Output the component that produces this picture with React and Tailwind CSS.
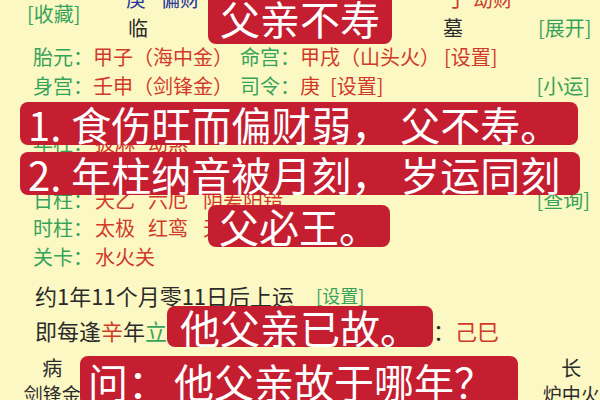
import React from 'react';

const G = 'text-[#36a35a]';
const R = 'text-[#d13a2b]';
const D = 'text-[#2b2b2b]';

function Overlay({ className, children }) {
  return (
    <div
      className={`absolute flex items-center justify-center rounded-[8px] bg-[#c41e30] text-[40px] leading-none whitespace-nowrap text-white ${className}`}
    >
      {children}
    </div>
  );
}

function Row({ children }) {
  return <div className="flex h-[28.5px] items-center pl-[33px] pr-[10px] text-[20px] whitespace-nowrap">{children}</div>;
}

export default function App() {
  return (
    <div className="relative h-[400px] w-[600px] overflow-hidden bg-[#fcf8c4] font-['Noto_Sans_CJK_SC',sans-serif]">
      {/* top table head */}
      <div className="mt-[-16px] flex h-[59px] text-[20px] whitespace-nowrap">
        <div className="flex w-[126px] items-center pl-[27px]">
          <span className={G}>[收藏]</span>
        </div>
        <div className="flex w-[317px] flex-col">
          <div className="flex h-[29px] items-center text-[#26389c]">
            <span>庚</span>
            <span className="ml-[14px]">偏财</span>
          </div>
          <div className={`flex h-[30px] items-center pl-[2px] ${D}`}>临</div>
        </div>
        <div className="flex w-[95px] flex-col">
          <div className="flex h-[29px] items-center text-[#c8402a]">
            <span className="ml-[4px]">丁</span>
            <span className="ml-[6px]">劫财</span>
          </div>
          <div className={`flex h-[30px] items-center ${D}`}>墓</div>
        </div>
        <div className="flex flex-col">
          <div className="h-[29px]" />
          <div className={`flex h-[30px] items-center ${G}`}>[展开]</div>
        </div>
      </div>

      {/* info rows */}
      <Row>
        <span className={G}>胎元：</span>
        <span className={R}>甲子（海中金）</span>
        <span className={`ml-[7px] ${G}`}>命宫：</span>
        <span className={R}>甲戌（山头火）</span>
        <span className={`ml-[4px] ${R}`}>[设置]</span>
      </Row>
      <Row>
        <span className={G}>身宫：</span>
        <span className={R}>壬申（剑锋金）</span>
        <span className={`ml-[7px] ${G}`}>司令：</span>
        <span className={R}>庚</span>
        <span className={`ml-[10px] ${R}`}>[设置]</span>
        <span className={`ml-auto ${G}`}>[小运]</span>
      </Row>
      <Row>
        <span className={G}>空亡：</span>
        <span className={R}>戌亥</span>
        <span className={`ml-[13px] ${R}`}>子丑</span>
      </Row>
      <Row>
        <span className={G}>年柱：</span>
        <span className={`ml-[2px] ${R}`}>披麻</span>
        <span className={`ml-[13px] ${R}`}>劫煞</span>
      </Row>
      <Row>
        <span className={G}>月柱：</span>
        <span className={`ml-[2px] ${R}`}>天德</span>
        <span className={`ml-[13px] ${R}`}>月德</span>
      </Row>
      <Row>
        <span className={G}>日柱：</span>
        <span className={`ml-[2px] ${R}`}>天乙</span>
        <span className={`ml-[13px] ${R}`}>六厄</span>
        <span className={`ml-[15px] ${R}`}>阴差阳错</span>
        <span className={`ml-auto ${G}`}>[查询]</span>
      </Row>
      <Row>
        <span className={G}>时柱：</span>
        <span className={`ml-[2px] ${R}`}>太极</span>
        <span className={`ml-[13px] ${R}`}>红鸾</span>
        <span className={`ml-[15px] ${R}`}>天喜</span>
      </Row>
      <Row>
        <span className={G}>关卡：</span>
        <span className={`ml-[2px] ${R}`}>水火关</span>
      </Row>

      {/* start of luck */}
      <div className="mt-[8px] flex h-[32px] items-center pl-[35px] whitespace-nowrap">
        <span className={`text-[22px] ${D}`}>约1年11个月零11日后上运</span>
        <span className={`ml-[22px] text-[18px] ${G}`}>[设置]</span>
      </div>
      <div className={`flex h-[38px] items-center pl-[35px] text-[22px] whitespace-nowrap ${D}`}>
        <span>即每逢</span>
        <span className={R}>辛</span>
        <span>年</span>
        <span className={G}>立</span>
        <span className="inline-block w-[266px] overflow-hidden">春后交运 当前大运</span>
        <span>：</span>
        <span className={R}>己巳</span>
      </div>

      {/* luck pillars */}
      <div className={`mt-[6px] ml-[9px] grid grid-cols-[repeat(7,86.5px)] text-center whitespace-nowrap ${D}`}>
        {['病', '死', '墓', '绝', '胎', '养', '长'].map((s, i) => (
          <div key={i} className="flex h-[26px] items-center justify-center text-[20px]">{s}</div>
        ))}
        {['剑锋金', '路旁土', '路旁土', '大林木', '大林木', '炉中火', '炉中火'].map((s, i) => (
          <div key={i} className="flex h-[26px] items-center justify-center text-[19px]">{s}</div>
        ))}
      </div>

      {/* red caption overlays */}
      <Overlay className="left-[208px] top-[-8px] h-[52px] w-[184px]">父亲不寿</Overlay>
      <Overlay className="left-[20px] top-[102px] h-[43px] w-[558px] justify-start pl-[8px]">
        <span className="mr-[10px]">1.</span>食伤旺而偏财弱， 父不寿。
      </Overlay>
      <Overlay className="left-[20px] top-[152px] h-[43px] w-[560px] justify-start pl-[8px]">
        <span className="mr-[10px]">2.</span>年柱纳音被月刻， 岁运同刻
      </Overlay>
      <Overlay className="left-[208px] top-[205px] h-[42px] w-[182px]">父必王。</Overlay>
      <Overlay className="left-[167px] top-[306px] h-[41px] w-[266px]">他父亲已故。</Overlay>
      <Overlay className="left-[80px] top-[356px] h-[50px] w-[438px] justify-start pl-[8px]">
        问：<span className="ml-[6px]">他父亲故于哪年？</span>
      </Overlay>
    </div>
  );
}
